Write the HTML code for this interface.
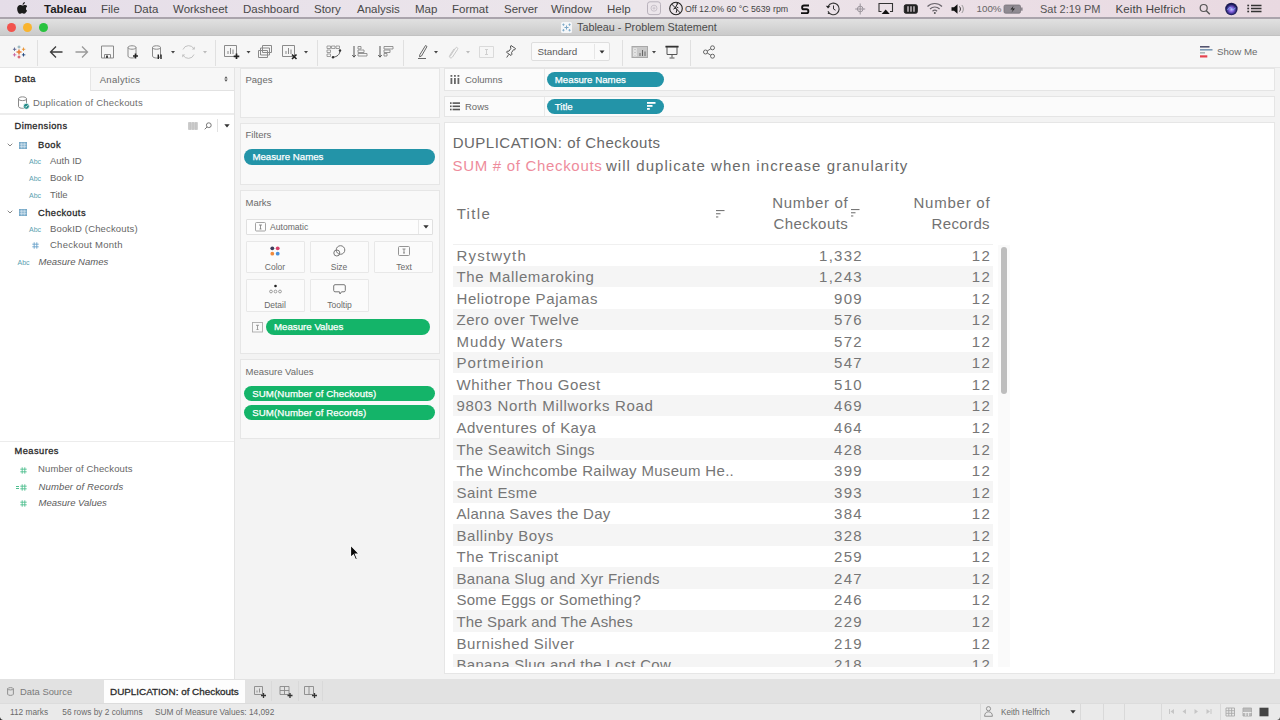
<!DOCTYPE html>
<html><head><meta charset="utf-8"><title>Tableau - Problem Statement</title>
<style>
*{box-sizing:border-box;margin:0;padding:0}
html,body{width:1280px;height:720px;overflow:hidden;background:#e2e2e2;font-family:"Liberation Sans",sans-serif;color:#333}
.a{position:absolute}
.t{position:absolute;white-space:nowrap;line-height:1}
.blue{background:#2394a8}
.green{background:#14b469}
</style></head><body>
<!-- shelves and cards -->
<div class="a" style="left:234.5px;top:68px;width:1045.50px;height:611.00px;background:#f3f3f3"></div>
<div class="a" style="left:240px;top:67.5px;width:199.70px;height:50.00px;background:#f9f9f9;border:1px solid #e6e6e6"></div>
<span class="t" style="left:245.50px;top:75px;font-size:9.5px;color:#6a6a6a;">Pages</span>
<div class="a" style="left:240px;top:122.5px;width:199.70px;height:62.00px;background:#f9f9f9;border:1px solid #e6e6e6"></div>
<span class="t" style="left:245.50px;top:130px;font-size:9.5px;color:#6a6a6a;">Filters</span>
<div class="a blue" style="left:244.00px;top:149.00px;width:190.70px;height:15.80px;border-radius:7.90px"></div><span class="t" style="left:252.40px;top:152px;font-size:9.7px;color:#fff;-webkit-text-stroke:.25px #fff;">Measure Names</span>
<div class="a" style="left:240px;top:190px;width:199.70px;height:163.50px;background:#f9f9f9;border:1px solid #e6e6e6"></div>
<span class="t" style="left:245.50px;top:198px;font-size:9.5px;color:#6a6a6a;">Marks</span>
<div class="a" style="left:245.5px;top:219px;width:187.00px;height:15.50px;background:#fdfdfd;border:1px solid #e0e0e0;border-radius:1px"></div>
<div class="a" style="left:418px;top:220px;width:1.00px;height:13.50px;background:#e8e8e8"></div>
<svg class="a" style="left:423px;top:225px" width="6" height="4" viewBox="0 0 6 4"><path d="M.3.300h5.400L3 3.600z" fill="#333"/></svg>
<svg class="a" style="left:254.500px;top:222px" width="11" height="10" viewBox="0 0 11 10" fill="none" stroke="#999" stroke-width=".9"><rect x=".5" y=".5" width="10" height="8.500" rx="1"/><path d="M4 3h3M5.500 3v4M4.500 7h2" stroke="#777" stroke-width=".8"/></svg>
<span class="t" style="left:270.00px;top:223px;font-size:8.6px;color:#6a6a6a;">Automatic</span>
<div class="a" style="left:245.5px;top:240.5px;width:59.20px;height:32.20px;background:#fbfbfb;border:1px solid #e8e8e8;border-radius:1px"></div>
<div class="a" style="left:309.5px;top:240.5px;width:59.50px;height:32.20px;background:#fbfbfb;border:1px solid #e8e8e8;border-radius:1px"></div>
<div class="a" style="left:374.4px;top:240.5px;width:58.60px;height:32.20px;background:#fbfbfb;border:1px solid #e8e8e8;border-radius:1px"></div>
<div class="a" style="left:245.5px;top:279px;width:59.20px;height:32.50px;background:#fbfbfb;border:1px solid #e8e8e8;border-radius:1px"></div>
<div class="a" style="left:309.5px;top:279px;width:59.50px;height:32.50px;background:#fbfbfb;border:1px solid #e8e8e8;border-radius:1px"></div>
<span class="t" style="left:225.00px;width:100px;text-align:center;top:263px;font-size:8.5px;color:#6a6a6a;">Color</span>
<span class="t" style="left:289.00px;width:100px;text-align:center;top:263px;font-size:8.5px;color:#6a6a6a;">Size</span>
<span class="t" style="left:354.00px;width:100px;text-align:center;top:263px;font-size:8.5px;color:#6a6a6a;">Text</span>
<span class="t" style="left:225.00px;width:100px;text-align:center;top:301px;font-size:8.5px;color:#6a6a6a;">Detail</span>
<span class="t" style="left:289.50px;width:100px;text-align:center;top:301px;font-size:8.5px;color:#6a6a6a;">Tooltip</span>
<svg class="a" style="left:270px;top:246px" width="10" height="10" viewBox="0 0 10 10"><circle cx="2.300" cy="2.300" r="1.900" fill="#3c3c5a"/><circle cx="7.700" cy="2.300" r="1.900" fill="#d8426a"/><circle cx="2.300" cy="7.700" r="1.900" fill="#f08a3c"/><circle cx="7.700" cy="7.700" r="1.900" fill="#4a90d9"/></svg>
<svg class="a" style="left:333px;top:245px" width="13" height="12" viewBox="0 0 13 12" fill="none" stroke="#777" stroke-width="1"><circle cx="7.500" cy="5" r="4.300"/><circle cx="3.800" cy="8" r="3"/></svg>
<svg class="a" style="left:398px;top:246px" width="12" height="10" viewBox="0 0 12 10" fill="none" stroke="#888" stroke-width=".9"><rect x=".5" y=".5" width="11" height="9" rx="1"/><path d="M4.500 3h3M6 3v4M5 7h2" stroke="#777" stroke-width=".8"/></svg>
<svg class="a" style="left:268.500px;top:284px" width="13" height="10" viewBox="0 0 13 10" fill="none" stroke="#888" stroke-width=".8"><circle cx="6.500" cy="2" r="1.300" fill="#222" stroke="none"/><circle cx="2" cy="7.500" r="1.400"/><circle cx="6.500" cy="7.500" r="1.400"/><circle cx="11" cy="7.500" r="1.400"/></svg>
<svg class="a" style="left:333px;top:283.500px" width="13" height="12" viewBox="0 0 13 12" fill="none" stroke="#777" stroke-width="1"><path d="M2 .7h9c.8 0 1.300.5 1.300 1.300v4.500c0 .8-.5 1.300-1.300 1.300H8.500L7 10 6.500 7.800H2C1.200 7.800.7 7.300.7 6.500V2C.7 1.200 1.200.7 2 .7z"/></svg>
<svg class="a" style="left:251.500px;top:322px" width="11" height="11" viewBox="0 0 11 11" fill="none" stroke="#aaa" stroke-width=".9"><rect x=".5" y=".5" width="10" height="9.500"/><path d="M4 3.300h3M5.500 3.300v4M4.500 7.500h2" stroke="#888" stroke-width=".8"/></svg>
<div class="a green" style="left:265.80px;top:319.30px;width:164.40px;height:16.00px;border-radius:8.00px"></div><span class="t" style="left:274.00px;top:322px;font-size:9.7px;color:#fff;-webkit-text-stroke:.25px #fff;">Measure Values</span>
<div class="a" style="left:240px;top:359.3px;width:199.70px;height:80.00px;background:#f9f9f9;border:1px solid #e6e6e6"></div>
<span class="t" style="left:245.50px;top:367px;font-size:9.5px;color:#6a6a6a;">Measure Values</span>
<div class="a green" style="left:244.00px;top:385.80px;width:191.00px;height:15.40px;border-radius:7.70px"></div><span class="t" style="left:252.20px;top:389px;font-size:9.7px;color:#fff;-webkit-text-stroke:.25px #fff;letter-spacing:.1px">SUM(Number of Checkouts)</span>
<div class="a green" style="left:244.00px;top:404.60px;width:191.00px;height:15.10px;border-radius:7.55px"></div><span class="t" style="left:252.20px;top:408px;font-size:9.7px;color:#fff;-webkit-text-stroke:.25px #fff;letter-spacing:.1px">SUM(Number of Records)</span>
<div class="a" style="left:443.7px;top:67.5px;width:831.80px;height:23.00px;background:#fbfbfb;border:1px solid #e5e5e5"></div><div class="a" style="left:544px;top:68.5px;width:1.00px;height:21.00px;background:#e8e8e8"></div>
<div class="a" style="left:443.7px;top:95.5px;width:831.80px;height:21.50px;background:#fbfbfb;border:1px solid #e5e5e5"></div><div class="a" style="left:544px;top:96.5px;width:1.00px;height:19.50px;background:#e8e8e8"></div>
<svg class="a" style="left:449.500px;top:74.500px" width="10" height="9" viewBox="0 0 10 9" fill="#666"><rect x=".5" y="0" width="1.800" height="1.800"/><rect x=".5" y="3" width="1.800" height="6"/><rect x="4" y="0" width="1.800" height="1.800"/><rect x="4" y="3" width="1.800" height="6"/><rect x="7.500" y="0" width="1.800" height="1.800"/><rect x="7.500" y="3" width="1.800" height="6"/></svg>
<span class="t" style="left:465.00px;top:75px;font-size:9.5px;color:#6a6a6a;">Columns</span>
<svg class="a" style="left:449.500px;top:101.500px" width="10" height="9" viewBox="0 0 10 9" fill="#555"><rect x="0" y=".3" width="1.600" height="1.600"/><rect x="2.600" y=".3" width="7.400" height="1.600"/><rect x="0" y="3.500" width="1.600" height="1.600"/><rect x="2.600" y="3.500" width="7.400" height="1.600"/><rect x="0" y="6.700" width="1.600" height="1.600"/><rect x="2.600" y="6.700" width="7.400" height="1.600"/></svg>
<span class="t" style="left:465.00px;top:102px;font-size:9.5px;color:#6a6a6a;">Rows</span>
<div class="a blue" style="left:546.70px;top:71.50px;width:117.80px;height:15.30px;border-radius:7.65px"></div><span class="t" style="left:554.80px;top:75px;font-size:9.7px;color:#fff;-webkit-text-stroke:.25px #fff;">Measure Names</span>
<div class="a blue" style="left:546.70px;top:98.60px;width:117.80px;height:15.20px;border-radius:7.60px"></div><span class="t" style="left:554.80px;top:102px;font-size:9.7px;color:#fff;-webkit-text-stroke:.25px #fff;">Title</span>
<svg class="a" style="left:646.800px;top:102px" width="9" height="8" viewBox="0 0 9 8" fill="#fff"><rect x="0" y="0" width="8.500" height="1.800"/><rect x="0" y="3" width="5.500" height="1.800"/><rect x="0" y="6" width="2.800" height="1.800"/></svg>
<!-- data pane -->
<div class="a" style="left:0px;top:68px;width:234.00px;height:611.00px;background:#fff"></div>
<div class="a" style="left:233.5px;top:68px;width:1.00px;height:611.00px;background:#e4e4e4"></div>
<div class="a" style="left:89.5px;top:68px;width:144.50px;height:22.70px;background:#f7f7f7;border-left:1px solid #e6e6e6;border-bottom:1px solid #e2e2e2"></div>
<span class="t" style="left:14.50px;top:75px;font-size:9.3px;color:#262626;-webkit-text-stroke:.3px #2a2a2a;letter-spacing:.45px">Data</span>
<span class="t" style="left:99.70px;top:75px;font-size:9.5px;color:#6a6a6a;letter-spacing:.3px">Analytics</span>
<svg class="a" style="left:224px;top:76px" width="4" height="6" viewBox="0 0 4 6"><path d="M.3 2.400L2 .3l1.700 2.100zM.3 3.600L2 5.700l1.700-2.100z" fill="#555"/></svg>
<svg class="a" style="left:17px;top:96px" width="13" height="14" viewBox="0 0 13 14" fill="none" stroke="#8a8a8a" stroke-width="1"><path d="M1.500 2.800c0-2.600 8-2.600 8 0v7.500c0 1.500-2.500 2-4 2s-4-.5-4-2zM1.500 2.800c0 2.400 8 2.400 8 0"/><circle cx="9.300" cy="10.300" r="3" fill="#1f8a86" stroke="#fff" stroke-width=".8"/><path d="M7.900 10.300l1 1 1.700-2" stroke="#fff" stroke-width=".8"/></svg>
<span class="t" style="left:33.00px;top:98px;font-size:9.5px;color:#6e6e6e;letter-spacing:.2px">Duplication of Checkouts</span>
<div class="a" style="left:0px;top:113.2px;width:233.50px;height:1.40px;background:#ececec"></div>
<span class="t" style="left:14.50px;top:122px;font-size:9.3px;color:#262626;-webkit-text-stroke:.3px #2a2a2a;letter-spacing:.45px">Dimensions</span>
<svg class="a" style="left:188px;top:122px" width="10" height="8" viewBox="0 0 10 8" fill="#c9c9c9" stroke="#b4b4b4" stroke-width=".5"><path d="M.5.500h2.500v7H.5zM3.700.500h2.500v7H3.700zM6.900.500h2.500v7H6.900z"/></svg>
<svg class="a" style="left:203.500px;top:122px" width="8" height="8" viewBox="0 0 8 8" fill="none" stroke="#777" stroke-width="1"><circle cx="4.800" cy="3.200" r="2.400"/><path d="M3 5L.7 7.300"/></svg>
<div class="a" style="left:217px;top:119px;width:1.00px;height:13.00px;background:#e2e2e2"></div>
<svg class="a" style="left:223.500px;top:123.800px" width="6" height="4" viewBox="0 0 6 4"><path d="M.3.300h5.400L3 3.600z" fill="#333"/></svg>
<svg class="a" style="left:6.5px;top:143px" width="6" height="4" viewBox="0 0 6 4" fill="none" stroke="#888" stroke-width="1"><path d="M.7.700L3 3l2.300-2.300"/></svg>
<svg class="a" style="left:19px;top:141.5px" width="8" height="7" viewBox="0 0 8 7"><rect x="0" y="0" width="8" height="7" fill="#8db7d2"/><path d="M0 2.200h8M0 4.600h8M2.700 0v7M5.300 0v7" stroke="#dbe9f2" stroke-width=".6"/><rect x=".3" y=".3" width="7.400" height="6.400" fill="none" stroke="#6fa3c4" stroke-width=".6"/></svg>
<span class="t" style="left:38.00px;top:141px;font-size:9.3px;color:#262626;-webkit-text-stroke:.3px #2a2a2a;letter-spacing:.45px">Book</span>
<span class="t" style="left:29.00px;top:158px;font-size:7px;color:#5b9fb1;">Abc</span>
<span class="t" style="left:50.00px;top:156px;font-size:9.5px;color:#666;">Auth ID</span>
<span class="t" style="left:29.00px;top:175px;font-size:7px;color:#5b9fb1;">Abc</span>
<span class="t" style="left:50.00px;top:173px;font-size:9.5px;color:#666;">Book ID</span>
<span class="t" style="left:29.00px;top:192px;font-size:7px;color:#5b9fb1;">Abc</span>
<span class="t" style="left:50.00px;top:190px;font-size:9.5px;color:#666;">Title</span>
<svg class="a" style="left:6.5px;top:210px" width="6" height="4" viewBox="0 0 6 4" fill="none" stroke="#888" stroke-width="1"><path d="M.7.700L3 3l2.300-2.300"/></svg>
<svg class="a" style="left:19px;top:208.5px" width="8" height="7" viewBox="0 0 8 7"><rect x="0" y="0" width="8" height="7" fill="#8db7d2"/><path d="M0 2.200h8M0 4.600h8M2.700 0v7M5.300 0v7" stroke="#dbe9f2" stroke-width=".6"/><rect x=".3" y=".3" width="7.400" height="6.400" fill="none" stroke="#6fa3c4" stroke-width=".6"/></svg>
<span class="t" style="left:38.00px;top:209px;font-size:9.3px;color:#262626;-webkit-text-stroke:.3px #2a2a2a;letter-spacing:.45px">Checkouts</span>
<span class="t" style="left:29.00px;top:226px;font-size:7px;color:#5b9fb1;">Abc</span>
<span class="t" style="left:50.00px;top:224px;font-size:9.5px;color:#666;letter-spacing:.15px">BookID (Checkouts)</span>
<svg class="a" style="left:31.5px;top:242.0px" width="7" height="7" viewBox="0 0 7 7" fill="none" stroke="#6aa3c9" stroke-width=".9"><path d="M2.200 .3v6.400M4.800 .3v6.400M.3 2.200h6.400M.3 4.800h6.400"/></svg>
<span class="t" style="left:50.00px;top:240px;font-size:9.5px;color:#666;letter-spacing:.25px">Checkout Month</span>
<span class="t" style="left:17.50px;top:259px;font-size:7px;color:#5b9fb1;">Abc</span>
<span class="t" style="left:38.50px;top:257px;font-size:9.5px;color:#5a5a5a;font-style:italic">Measure Names</span>
<div class="a" style="left:0px;top:440.5px;width:233.50px;height:1.50px;background:#ececec"></div>
<span class="t" style="left:14.50px;top:447px;font-size:9.3px;color:#262626;-webkit-text-stroke:.3px #2a2a2a;letter-spacing:.45px">Measures</span>
<svg class="a" style="left:19.5px;top:466.5px" width="7" height="7" viewBox="0 0 7 7" fill="none" stroke="#4fbf8f" stroke-width=".9"><path d="M2.200 .3v6.400M4.800 .3v6.400M.3 2.200h6.400M.3 4.800h6.400"/></svg>
<span class="t" style="left:38.00px;top:464px;font-size:9.5px;color:#666;letter-spacing:.15px">Number of Checkouts</span>
<svg class="a" style="left:19.5px;top:483.5px" width="7" height="7" viewBox="0 0 7 7" fill="none" stroke="#4fbf8f" stroke-width=".9"><path d="M2.200 .3v6.400M4.800 .3v6.400M.3 2.200h6.400M.3 4.800h6.400"/></svg>
<div class="a" style="left:16px;top:485.5px;width:3.00px;height:1.00px;background:#4fbf8f"></div>
<div class="a" style="left:16px;top:487.5px;width:3.00px;height:1.00px;background:#4fbf8f"></div>
<span class="t" style="left:38.50px;top:482px;font-size:9.5px;color:#5a5a5a;font-style:italic;letter-spacing:.15px">Number of Records</span>
<svg class="a" style="left:19.5px;top:500.0px" width="7" height="7" viewBox="0 0 7 7" fill="none" stroke="#4fbf8f" stroke-width=".9"><path d="M2.200 .3v6.400M4.800 .3v6.400M.3 2.200h6.400M.3 4.800h6.400"/></svg>
<span class="t" style="left:38.50px;top:498px;font-size:9.5px;color:#5a5a5a;font-style:italic">Measure Values</span>
<!-- viz -->
<div class="a" style="left:443.7px;top:122px;width:831.80px;height:551.50px;background:#fff;border:1px solid #e6e6e6"></div>
<span class="t" style="left:452.70px;top:135px;font-size:15px;color:#686868;letter-spacing:0.491px">DUPLICATION: of Checkouts</span>
<span class="t" style="left:452.50px;top:158px;font-size:15px;color:#ee8c9c;letter-spacing:0.690px">SUM # of Checkouts</span>
<span class="t" style="left:605.95px;top:158px;font-size:15px;color:#6a6a6a;letter-spacing:1.059px">will duplicate when increase granularity</span>
<span class="t" style="left:456.70px;top:206px;font-size:15px;color:#727272;letter-spacing:1.330px">Title</span>
<span class="t" style="left:772.20px;top:195px;font-size:15px;color:#727272;letter-spacing:0.696px">Number of</span>
<span class="t" style="left:773.45px;top:216px;font-size:15px;color:#727272;letter-spacing:0.434px">Checkouts</span>
<span class="t" style="left:913.50px;top:195px;font-size:15px;color:#727272;letter-spacing:0.759px">Number of</span>
<span class="t" style="left:931.50px;top:216px;font-size:15px;color:#727272;letter-spacing:0.373px">Records</span>
<svg class="a" style="left:715.5px;top:209.5px" width="9" height="8" viewBox="0 0 9 8" fill="#777"><rect x="0" y="0" width="8.500" height="1.100"/><rect x="0" y="3.200" width="4.500" height="1.100"/><rect x="0" y="6.400" width="2.300" height="1.100"/></svg>
<svg class="a" style="left:850.5px;top:209.3px" width="9" height="8" viewBox="0 0 9 8" fill="#777"><rect x="0" y="0" width="8.500" height="1.100"/><rect x="0" y="3.200" width="4.500" height="1.100"/><rect x="0" y="6.400" width="2.300" height="1.100"/></svg>
<div class="a" style="left:452.5px;top:243.9px;width:540.00px;height:1.00px;background:#f0f0f0"></div>
<div class="a" style="left:997.5px;top:245px;width:12.50px;height:421.80px;background:#fafafa"></div>
<div class="a" style="left:444px;top:245px;width:570px;height:422px;overflow:hidden">
<span class="t" style="left:12.50px;top:3px;font-size:15px;color:#767676;letter-spacing:1.208px">Rystwyth</span>
<span class="t" style="left:318.90px;width:100px;text-align:right;top:3px;font-size:15px;color:#767676;letter-spacing:1.25px">1,332</span>
<span class="t" style="left:447.05px;width:100px;text-align:right;top:3px;font-size:15px;color:#767676;letter-spacing:1.25px">12</span>
<div class="a" style="left:8.5px;top:20.60px;width:540px;height:21.500px;background:#f5f5f5"></div>
<span class="t" style="left:12.50px;top:24px;font-size:15px;color:#767676;letter-spacing:0.609px">The Mallemaroking</span>
<span class="t" style="left:318.90px;width:100px;text-align:right;top:24px;font-size:15px;color:#767676;letter-spacing:1.25px">1,243</span>
<span class="t" style="left:447.05px;width:100px;text-align:right;top:24px;font-size:15px;color:#767676;letter-spacing:1.25px">12</span>
<span class="t" style="left:12.50px;top:46px;font-size:15px;color:#767676;letter-spacing:0.597px">Heliotrope Pajamas</span>
<span class="t" style="left:318.90px;width:100px;text-align:right;top:46px;font-size:15px;color:#767676;letter-spacing:1.25px">909</span>
<span class="t" style="left:447.05px;width:100px;text-align:right;top:46px;font-size:15px;color:#767676;letter-spacing:1.25px">12</span>
<div class="a" style="left:8.5px;top:63.71px;width:540px;height:21.500px;background:#f5f5f5"></div>
<span class="t" style="left:12.50px;top:67px;font-size:15px;color:#767676;letter-spacing:0.501px">Zero over Twelve</span>
<span class="t" style="left:318.90px;width:100px;text-align:right;top:67px;font-size:15px;color:#767676;letter-spacing:1.25px">576</span>
<span class="t" style="left:447.05px;width:100px;text-align:right;top:67px;font-size:15px;color:#767676;letter-spacing:1.25px">12</span>
<span class="t" style="left:12.50px;top:89px;font-size:15px;color:#767676;letter-spacing:0.901px">Muddy Waters</span>
<span class="t" style="left:318.90px;width:100px;text-align:right;top:89px;font-size:15px;color:#767676;letter-spacing:1.25px">572</span>
<span class="t" style="left:447.05px;width:100px;text-align:right;top:89px;font-size:15px;color:#767676;letter-spacing:1.25px">12</span>
<div class="a" style="left:8.5px;top:106.82px;width:540px;height:21.500px;background:#f5f5f5"></div>
<span class="t" style="left:12.50px;top:110px;font-size:15px;color:#767676;letter-spacing:1.010px">Portmeirion</span>
<span class="t" style="left:318.90px;width:100px;text-align:right;top:110px;font-size:15px;color:#767676;letter-spacing:1.25px">547</span>
<span class="t" style="left:447.05px;width:100px;text-align:right;top:110px;font-size:15px;color:#767676;letter-spacing:1.25px">12</span>
<span class="t" style="left:12.50px;top:132px;font-size:15px;color:#767676;letter-spacing:0.565px">Whither Thou Goest</span>
<span class="t" style="left:318.90px;width:100px;text-align:right;top:132px;font-size:15px;color:#767676;letter-spacing:1.25px">510</span>
<span class="t" style="left:447.05px;width:100px;text-align:right;top:132px;font-size:15px;color:#767676;letter-spacing:1.25px">12</span>
<div class="a" style="left:8.5px;top:149.93px;width:540px;height:21.500px;background:#f5f5f5"></div>
<span class="t" style="left:12.50px;top:153px;font-size:15px;color:#767676;letter-spacing:0.676px">9803 North Millworks Road</span>
<span class="t" style="left:318.90px;width:100px;text-align:right;top:153px;font-size:15px;color:#767676;letter-spacing:1.25px">469</span>
<span class="t" style="left:447.05px;width:100px;text-align:right;top:153px;font-size:15px;color:#767676;letter-spacing:1.25px">12</span>
<span class="t" style="left:12.50px;top:175px;font-size:15px;color:#767676;letter-spacing:0.493px">Adventures of Kaya</span>
<span class="t" style="left:318.90px;width:100px;text-align:right;top:175px;font-size:15px;color:#767676;letter-spacing:1.25px">464</span>
<span class="t" style="left:447.05px;width:100px;text-align:right;top:175px;font-size:15px;color:#767676;letter-spacing:1.25px">12</span>
<div class="a" style="left:8.5px;top:193.04px;width:540px;height:21.500px;background:#f5f5f5"></div>
<span class="t" style="left:12.50px;top:197px;font-size:15px;color:#767676;letter-spacing:0.322px">The Seawitch Sings</span>
<span class="t" style="left:318.90px;width:100px;text-align:right;top:197px;font-size:15px;color:#767676;letter-spacing:1.25px">428</span>
<span class="t" style="left:447.05px;width:100px;text-align:right;top:197px;font-size:15px;color:#767676;letter-spacing:1.25px">12</span>
<span class="t" style="left:12.50px;top:218px;font-size:15px;color:#767676;letter-spacing:0.319px">The Winchcombe Railway Museum He..</span>
<span class="t" style="left:318.90px;width:100px;text-align:right;top:218px;font-size:15px;color:#767676;letter-spacing:1.25px">399</span>
<span class="t" style="left:447.05px;width:100px;text-align:right;top:218px;font-size:15px;color:#767676;letter-spacing:1.25px">12</span>
<div class="a" style="left:8.5px;top:236.15px;width:540px;height:21.500px;background:#f5f5f5"></div>
<span class="t" style="left:12.50px;top:240px;font-size:15px;color:#767676;letter-spacing:0.427px">Saint Esme</span>
<span class="t" style="left:318.90px;width:100px;text-align:right;top:240px;font-size:15px;color:#767676;letter-spacing:1.25px">393</span>
<span class="t" style="left:447.05px;width:100px;text-align:right;top:240px;font-size:15px;color:#767676;letter-spacing:1.25px">12</span>
<span class="t" style="left:12.50px;top:261px;font-size:15px;color:#767676;letter-spacing:0.282px">Alanna Saves the Day</span>
<span class="t" style="left:318.90px;width:100px;text-align:right;top:261px;font-size:15px;color:#767676;letter-spacing:1.25px">384</span>
<span class="t" style="left:447.05px;width:100px;text-align:right;top:261px;font-size:15px;color:#767676;letter-spacing:1.25px">12</span>
<div class="a" style="left:8.5px;top:279.26px;width:540px;height:21.500px;background:#f5f5f5"></div>
<span class="t" style="left:12.50px;top:283px;font-size:15px;color:#767676;letter-spacing:0.563px">Ballinby Boys</span>
<span class="t" style="left:318.90px;width:100px;text-align:right;top:283px;font-size:15px;color:#767676;letter-spacing:1.25px">328</span>
<span class="t" style="left:447.05px;width:100px;text-align:right;top:283px;font-size:15px;color:#767676;letter-spacing:1.25px">12</span>
<span class="t" style="left:12.50px;top:304px;font-size:15px;color:#767676;letter-spacing:0.583px">The Triscanipt</span>
<span class="t" style="left:318.90px;width:100px;text-align:right;top:304px;font-size:15px;color:#767676;letter-spacing:1.25px">259</span>
<span class="t" style="left:447.05px;width:100px;text-align:right;top:304px;font-size:15px;color:#767676;letter-spacing:1.25px">12</span>
<div class="a" style="left:8.5px;top:322.37px;width:540px;height:21.500px;background:#f5f5f5"></div>
<span class="t" style="left:12.50px;top:326px;font-size:15px;color:#767676;letter-spacing:0.273px">Banana Slug and Xyr Friends</span>
<span class="t" style="left:318.90px;width:100px;text-align:right;top:326px;font-size:15px;color:#767676;letter-spacing:1.25px">247</span>
<span class="t" style="left:447.05px;width:100px;text-align:right;top:326px;font-size:15px;color:#767676;letter-spacing:1.25px">12</span>
<span class="t" style="left:12.50px;top:347px;font-size:15px;color:#767676;letter-spacing:0.228px">Some Eggs or Something?</span>
<span class="t" style="left:318.90px;width:100px;text-align:right;top:347px;font-size:15px;color:#767676;letter-spacing:1.25px">246</span>
<span class="t" style="left:447.05px;width:100px;text-align:right;top:347px;font-size:15px;color:#767676;letter-spacing:1.25px">12</span>
<div class="a" style="left:8.5px;top:365.48px;width:540px;height:21.500px;background:#f5f5f5"></div>
<span class="t" style="left:12.50px;top:369px;font-size:15px;color:#767676;letter-spacing:0.142px">The Spark and The Ashes</span>
<span class="t" style="left:318.90px;width:100px;text-align:right;top:369px;font-size:15px;color:#767676;letter-spacing:1.25px">229</span>
<span class="t" style="left:447.05px;width:100px;text-align:right;top:369px;font-size:15px;color:#767676;letter-spacing:1.25px">12</span>
<span class="t" style="left:12.50px;top:391px;font-size:15px;color:#767676;letter-spacing:0.555px">Burnished Silver</span>
<span class="t" style="left:318.90px;width:100px;text-align:right;top:391px;font-size:15px;color:#767676;letter-spacing:1.25px">219</span>
<span class="t" style="left:447.05px;width:100px;text-align:right;top:391px;font-size:15px;color:#767676;letter-spacing:1.25px">12</span>
<div class="a" style="left:8.5px;top:408.59px;width:540px;height:21.500px;background:#f5f5f5"></div>
<span class="t" style="left:12.50px;top:412px;font-size:15px;color:#767676;letter-spacing:0.277px">Banana Slug and the Lost Cow</span>
<span class="t" style="left:318.90px;width:100px;text-align:right;top:412px;font-size:15px;color:#767676;letter-spacing:1.25px">218</span>
<span class="t" style="left:447.05px;width:100px;text-align:right;top:412px;font-size:15px;color:#767676;letter-spacing:1.25px">12</span>
</div>
<div class="a" style="left:1001.3px;top:246.5px;width:5.70px;height:147.00px;border-radius:3px;background:#bdbdbd"></div>
<!-- menubar titlebar toolbar -->
<div class="a" style="left:0px;top:0px;width:1280.00px;height:17.00px;background:linear-gradient(90deg,#e5dde8 0%,#e9e2ea 25%,#ece6eb 50%,#ebdfe6 75%,#e9d9e1 100%)"></div>
<div class="a" style="left:0px;top:17px;width:1280.00px;height:1.50px;background:#aaa4ac"></div>
<svg class="a" style="left:16.800px;top:1.800px" width="10.600" height="12" viewBox="-.6 0 12 13.400"><path d="M8.300 0c.1.800-.2 1.500-.7 2.100-.5.600-1.200 1-1.900.9-.1-.8.300-1.500.7-2C6.900.400 7.700 0 8.300 0zM10.800 9.500c-.3.800-.5 1.100-.9 1.800-.6.900-1.400 2-2.400 2-.9 0-1.100-.6-2.300-.6s-1.500.6-2.400.6c-1 0-1.700-1-2.300-1.900C-.6 9.100-.8 6.300.300 4.900c.7-1 1.800-1.600 2.900-1.600 1.100 0 1.800.600 2.700.600.900 0 1.400-.6 2.700-.6.900 0 1.900.500 2.600 1.400-2.300 1.300-1.900 4.500-.4 4.800z" fill="#1b1b1b"/></svg>
<span class="t" style="left:44.00px;top:4px;font-size:11.5px;color:#1d1d1d;font-weight:bold">Tableau</span>
<span class="t" style="left:101.00px;top:4px;font-size:11.5px;color:#484848;">File</span>
<span class="t" style="left:134.00px;top:4px;font-size:11.5px;color:#484848;">Data</span>
<span class="t" style="left:173.00px;top:4px;font-size:11.5px;color:#484848;">Worksheet</span>
<span class="t" style="left:243.00px;top:4px;font-size:11.5px;color:#484848;">Dashboard</span>
<span class="t" style="left:314.00px;top:4px;font-size:11.5px;color:#484848;">Story</span>
<span class="t" style="left:357.00px;top:4px;font-size:11.5px;color:#484848;">Analysis</span>
<span class="t" style="left:415.00px;top:4px;font-size:11.5px;color:#484848;">Map</span>
<span class="t" style="left:452.00px;top:4px;font-size:11.5px;color:#484848;">Format</span>
<span class="t" style="left:504.00px;top:4px;font-size:11.5px;color:#484848;">Server</span>
<span class="t" style="left:551.00px;top:4px;font-size:11.5px;color:#484848;">Window</span>
<span class="t" style="left:607.00px;top:4px;font-size:11.5px;color:#484848;">Help</span>
<svg class="a" style="left:640px;top:0" width="640" height="18" viewBox="640 0 640 18" fill="none" stroke="#222" stroke-width="1.200">
<rect x="647.500" y="1.800" width="13" height="12.800" rx="2.500" stroke="#b9b2bc" stroke-width="1"/><circle cx="654" cy="8.200" r="3" stroke="#c4bdc6" stroke-width=".9"/><path d="M652.500 8.200h3M654 6.700v3" stroke="#c4bdc6" stroke-width=".8"/>
<circle cx="676" cy="8.500" r="6.300" stroke="#222" stroke-width="1.100"/><path d="M671.600 4l8.800 9" stroke="#222" stroke-width="1"/><path d="M677 4.500l-1.800 3.500 1.800 1.500-.8 3.200M675.200 8l-1.800 1.200M676.500 7l1.800.8" stroke="#222" stroke-width="1"/><circle cx="677.300" cy="3.800" r=".9" fill="#222" stroke="none"/>
<path d="M809 5.500h-5c-2.500 0-2.500 3.800 0 3.800h2.500c2.500 0 2.500 3.800 0 3.800H801" stroke="#111" stroke-width="1.900"/>
<path d="M828.200 6.200a5.800 5.800 0 1 1-.2 5" stroke="#333" stroke-width="1.100"/><path d="M825.800 5.800l2.200 2.800 2.300-2.400z" fill="#222" stroke="none"/><path d="M833.500 5.500v3.500l2 1.200" stroke="#333" stroke-width="1"/><circle cx="828.500" cy="13.200" r=".8" fill="#222" stroke="none"/>
<g stroke="#9a949c" stroke-width="1"><circle cx="860.200" cy="9" r="2.800"/><path d="M860.200 3.500v11M855.200 9h10"/></g>
<path d="M881.500 11.500h-2.500v-8h13.500v8h-2.500" stroke="#333" stroke-width="1.100"/><path d="M885.700 9.500l4 4.500h-8z" fill="#111" stroke="none"/>
<rect x="904.300" y="4.800" width="13" height="8.400" rx="1.500" fill="#222" stroke="#222" stroke-width="1"/><path d="M908 6.200v5.600M911 6.200v5.600M914 6.200v5.600" stroke="#ebe0e7" stroke-width="1.200"/>
<g stroke="#6a656c" stroke-width="1.200"><path d="M927.500 6.500c4-4 10.500-4 14.500 0M930 9c2.800-2.700 6.800-2.700 9.600 0M932.500 11.300c1.400-1.300 3.200-1.300 4.600 0"/></g><circle cx="934.800" cy="13" r="1" fill="#555" stroke="none"/>
<path d="M951.500 7.300h2.500l3.500-3v9.400l-3.500-3h-2.500z" fill="#111" stroke="none"/><path d="M959.500 6.500c1.200 1.500 1.200 3.500 0 5" stroke="#333" stroke-width="1"/><path d="M961.800 5c2 2.300 2 5.700 0 8" stroke="#999" stroke-width="1"/>
<rect x="1004" y="5" width="16.500" height="8.200" rx="1.500" fill="#8f8a92" stroke="#77727a" stroke-width=".8"/><rect x="1021.200" y="7.500" width="1.300" height="3.200" fill="#77727a" stroke="none"/><path d="M1013.500 5.800l-3 3.600h2.500l-1.500 3.200 3.500-4h-2.500z" fill="#222" stroke="none"/>
<circle cx="1203.700" cy="8" r="3.500" stroke="#555" stroke-width="1.200"/><path d="M1206.300 10.700l3.500 3.500" stroke="#555" stroke-width="1.400"/>
<defs><radialGradient id="siri" cx=".5" cy=".55" r=".6"><stop offset="0" stop-color="#c9b6ff"/><stop offset=".35" stop-color="#7a5ad6"/><stop offset=".7" stop-color="#1c1d5e"/><stop offset="1" stop-color="#101038"/></radialGradient></defs>
<circle cx="1231.400" cy="9" r="6.200" fill="url(#siri)" stroke="none"/><path d="M1227.500 10c1.500-2.500 3-3.500 4-1.500s2.500 1.500 3.800-.8" stroke="#7fd4ff" stroke-width=".9" opacity=".8"/>
<g stroke="#333" stroke-width="1.500"><path d="M1251 5.500h10.500M1251 8.500h10.500M1251 11.500h10.500"/></g><g fill="#333" stroke="none"><rect x="1247.300" y="4.700" width="1.800" height="1.600"/><rect x="1247.300" y="7.700" width="1.800" height="1.600"/><rect x="1247.300" y="10.700" width="1.800" height="1.600"/></g>
</svg>
<span class="t" style="left:685.00px;top:5px;font-size:8.8px;color:#444;">Off 12.0% 60 °C 5639 rpm</span>
<span class="t" style="left:976.50px;top:4px;font-size:9.8px;color:#666;">100%</span>
<span class="t" style="left:1040.00px;top:4px;font-size:11px;color:#555;">Sat 2:19 PM</span>
<span class="t" style="left:1115.50px;top:4px;font-size:11.5px;color:#444;letter-spacing:.12px">Keith Helfrich</span>
<div class="a" style="left:0px;top:18.5px;width:1280.00px;height:17.00px;background:linear-gradient(#e1e1e1,#c9c9c9)"></div>
<div class="a" style="left:0px;top:34.5px;width:1280.00px;height:1.00px;background:#c2c2c2"></div>
<div class="a" style="left:6.5px;top:22.500px;width:9.400px;height:9.400px;border-radius:5px;background:#f2544d"></div>
<div class="a" style="left:22.5px;top:22.500px;width:9.400px;height:9.400px;border-radius:5px;background:#f9b42e"></div>
<div class="a" style="left:38.5px;top:22.500px;width:9.400px;height:9.400px;border-radius:5px;background:#29c33f"></div>
<svg class="a" style="left:560.500px;top:21.500px" width="11" height="11" viewBox="0 0 11 11"><rect x="0" y="0" width="11" height="11" rx="1.500" fill="#f4f6f8"/><g fill="#7aa7c7"><rect x="5" y="3.500" width="1" height="4"/><rect x="3.500" y="5" width="4" height="1"/><rect x="2" y="1.500" width=".8" height="2.400"/><rect x="1.200" y="2.300" width="2.400" height=".8"/><rect x="8.200" y="1.500" width=".8" height="2.400"/><rect x="7.400" y="2.300" width="2.400" height=".8"/><rect x="2" y="7" width=".8" height="2.400"/><rect x="1.200" y="7.800" width="2.400" height=".8"/><rect x="8.200" y="7" width=".8" height="2.400"/><rect x="7.400" y="7.800" width="2.400" height=".8"/></g></svg>
<span class="t" style="left:577.00px;top:22px;font-size:10.8px;color:#4a4a4a;">Tableau - Problem Statement</span>
<div class="a" style="left:0px;top:35.5px;width:1280.00px;height:31.00px;background:#f6f6f6"></div>
<div class="a" style="left:0px;top:66.5px;width:1280.00px;height:1.50px;background:#e6e6e6"></div>
<svg class="a" style="left:0;top:36px" width="1280" height="32" viewBox="0 36 1280 32" fill="none" stroke="#666" stroke-width="1">
<g stroke="none">
<rect x="18.300" y="49.500" width="1.400" height="5" fill="#e8762c"/><rect x="16.500" y="51.300" width="5" height="1.400" fill="#e8762c"/>
<rect x="18.600" y="45.500" width=".8" height="3" fill="#7099a6"/><rect x="17.500" y="46.600" width="3" height=".8" fill="#7099a6"/>
<rect x="18.600" y="55.500" width=".8" height="3" fill="#c72035"/><rect x="17.500" y="56.600" width="3" height=".8" fill="#c72035"/>
<rect x="14.100" y="47.500" width=".9" height="3.400" fill="#5b6591"/><rect x="12.900" y="48.800" width="3.400" height=".9" fill="#5b6591"/>
<rect x="23.100" y="47.500" width=".9" height="3.400" fill="#eb912c"/><rect x="21.900" y="48.800" width="3.400" height=".9" fill="#eb912c"/>
<rect x="14.100" y="53.100" width=".9" height="3.400" fill="#c9619f"/><rect x="12.900" y="54.400" width="3.400" height=".9" fill="#c9619f"/>
<rect x="23.100" y="53.100" width=".9" height="3.400" fill="#1f447e"/><rect x="21.900" y="54.400" width="3.400" height=".9" fill="#1f447e"/>
</g>
<g stroke="#e0e0e0"><path d="M37.500 40v26M215.500 40v26M317.500 40v26M403.500 40v26M622.500 40v26M690.500 40v26"/></g>
<path d="M62.500 52H50.500M56 46.500L50.500 52l5.500 5.500" stroke="#3c3c3c" stroke-width="1.300"/>
<path d="M75.500 52H87.500M82 46.500L87.500 52l-5.500 5.500" stroke="#9a9a9a" stroke-width="1.300"/>
<path d="M101.500 46h12v12h-12zM104.500 58v-3.500h6V58" stroke="#8a8a8a"/><rect x="106" y="55.500" width="2" height="2.500" fill="#444" stroke="none"/>
<path d="M128 47.500c0-2.300 8-2.300 8 0v8.500c0 1.500-2.500 2-4 2s-4-.5-4-2zM128 47.500c0 2.300 8 2.300 8 0" stroke="#8a8a8a"/>
<path d="M135.500 53.500v5M133 56h5" stroke="#222" stroke-width="1.600"/>
<path d="M152.500 47.500c0-2.300 8-2.300 8 0v8.500c0 1.500-2.500 2-4 2s-4-.5-4-2zM152.500 47.500c0 2.300 8 2.300 8 0" stroke="#8a8a8a"/>
<path d="M158.300 54.500v4.500M161 54.500v4.500" stroke="#222" stroke-width="1.400"/>
<path d="M171 51h4l-2 2.500z" fill="#444" stroke="none"/>
<path d="M183 49.500a6 6 0 0 1 11-.5M194 54.500a6 6 0 0 1-11 .5" stroke="#c2c2c2"/><path d="M194.800 46.500v3h-3zM182.200 57.500v-3h3z" fill="#c2c2c2" stroke="none"/>
<path d="M203 51h4l-2 2.500z" fill="#bbb" stroke="none"/>
<path d="M224.500 45.500h12v11h-12z" stroke="#8a8a8a"/><path d="M228 54v-3M230.500 54v-6M233 54v-4.500" stroke="#8a8a8a"/>
<path d="M236.500 53.500v5.500M233.700 56.300h5.600" stroke="#222" stroke-width="1.700"/>
<path d="M246.5 51h4l-2 2.500z" fill="#444" stroke="none"/>
<path d="M262.500 45.500h9v7h-9zM260.500 48h9v7h-9zM258.500 50.500h9v7h-9z" stroke="#8a8a8a" fill="#f6f6f6"/>
<path d="M282.500 45.500h12v11h-12z" stroke="#8a8a8a"/><path d="M286 54v-3M288.500 54v-6M291 54v-4.500" stroke="#8a8a8a"/>
<path d="M292 54.500l4.500 4.500M296.500 54.500l-4.500 4.500" stroke="#222" stroke-width="1.600"/>
<path d="M304 51h4l-2 2.500z" fill="#444" stroke="none"/>
<path d="M327 46h3.500v2.500H327zM331.500 46h3.500v2.500h-3.500zM336 46h3.500v2.500H336zM327 50h3.500v2.500H327zM327 54h3.500v2.500H327z" stroke="#8a8a8a" stroke-width=".8"/>
<path d="M340 50.500c0 4-3 6.500-7 6.500" stroke="#555"/><circle cx="340" cy="50.500" r="1.200" fill="#333" stroke="none"/><circle cx="333" cy="57.300" r="1.200" fill="#333" stroke="none"/>
<path d="M354 46v11M352.300 55l1.700 2.200 1.700-2.200" stroke="#555"/>
<path d="M358 46.500h3v2.500h-3zM358 50h6v2.500h-6zM358 53.500h9v2.500h-9z" stroke="#8a8a8a" stroke-width=".9"/>
<path d="M380 46v11M378.300 55l1.700 2.200 1.700-2.200" stroke="#555"/>
<path d="M384 46.500h9v2.500h-9zM384 50h6v2.500h-6zM384 53.500h3v2.500h-3z" stroke="#8a8a8a" stroke-width=".9"/>
<path d="M425.500 45.500l1.500 1-5.500 9.500-2 .8.300-2zM418 58.500h8" stroke="#666"/>
<path d="M434 51h4l-2 2.500z" fill="#444" stroke="none"/>
<path d="M450 56.500l5.500-8.500c1-1.500 3 0 2 1.500l-5 7.500c-1.500 2-4 .3-2.800-1.500l4.300-6.500" stroke="#c8c8c8"/>
<path d="M466 51h4l-2 2.500z" fill="#bbb" stroke="none"/>
<path d="M479.500 46.500h14v11h-14z" stroke="#dadada"/><path d="M485 49.500h3M486.500 49.500v5M485 54.500h3" stroke="#d0d0d0"/>
<path d="M511 45.500l4.500 3-1 1.500-1-.3-2 3 .5 1.500-1 1.300-4.500-3.200 1-1.300 1.500.2 2-3-.7-1.200zM508.700 54.500l-2 3" stroke="#555"/>
<rect x="531.500" y="42.500" width="78" height="18" rx="1.500" fill="#fafafa" stroke="#dedede"/>
<path d="M594.500 44v15" stroke="#e6e6e6"/>
<path d="M599.500 50.500h5l-2.500 3z" fill="#333" stroke="none"/>
<rect x="632" y="46.500" width="15.500" height="11" fill="#c9c9c9" stroke="#a8a8a8"/>
<path d="M633.500 48.500h3v2h-3zM633.500 51.500h3v2h-3zM633.500 54.500h3v1.500h-3z" stroke="#eee" stroke-width=".7"/>
<path d="M640 56v-3M642.500 56v-6M645 56v-4.500" stroke="#666"/>
<path d="M652 51h4l-2 2.500z" fill="#444" stroke="none"/>
<path d="M665.500 47h13M667 47v7.500h10V47M672 54.500v3M669.500 58h5" stroke="#555"/><path d="M665.500 46.500h13" stroke="#333" stroke-width="1.500"/>
<g stroke="#666"><circle cx="705.500" cy="52" r="2"/><circle cx="712.500" cy="47.800" r="2"/><circle cx="712.500" cy="56.200" r="2"/><path d="M707.200 51l3.600-2.200M707.200 53l3.600 2.200"/></g>
<g stroke="none"><rect x="1200" y="46" width="9.500" height="1.600" fill="#54546f"/><rect x="1200" y="49" width="12.500" height="1.600" fill="#7d9ab5"/><rect x="1200" y="52.200" width="5" height="1.300" fill="#9aa"/><rect x="1200" y="55.300" width="7.300" height="2.200" fill="#e5424f"/></g>
</svg>
<span class="t" style="left:537.50px;top:47px;font-size:9.8px;color:#5a5a5a;">Standard</span>
<span class="t" style="left:1217.00px;top:47px;font-size:9.7px;color:#6a6a6a;">Show Me</span>
<!-- tabs status -->
<div class="a" style="left:0px;top:679.4px;width:1280.00px;height:23.60px;background:#e2e2e2"></div>
<div class="a" style="left:104.4px;top:680.2px;width:140.20px;height:22.80px;background:#fdfdfd"></div>
<svg class="a" style="left:7px;top:686.500px" width="7" height="9" viewBox="0 0 7 9" fill="none" stroke="#888" stroke-width=".9"><path d="M.6 1.800c0-1.600 5.800-1.600 5.800 0v5.400c0 1.600-5.800 1.600-5.800 0zM.6 1.800c0 1.500 5.800 1.500 5.800 0"/></svg>
<span class="t" style="left:20.00px;top:687px;font-size:9.4px;color:#7a7a7a;">Data Source</span>
<span class="t" style="left:110.00px;top:687px;font-size:9.9px;color:#2b2b2b;-webkit-text-stroke:.3px #2b2b2b">DUPLICATION: of Checkouts</span>
<div class="a" style="left:270.5px;top:681px;width:1.00px;height:20.00px;background:#d9d9d9"></div>
<div class="a" style="left:297.5px;top:681px;width:1.00px;height:20.00px;background:#d9d9d9"></div>
<div class="a" style="left:322px;top:681px;width:1.00px;height:20.00px;background:#d9d9d9"></div>
<svg class="a" style="left:249.500px;top:682.800px" width="72" height="18" viewBox="250 682 72 18" fill="none" stroke="#888" stroke-width=".9"><path d="M254.500 685.500h8v8h-8z"/><path d="M257 691.500v-2M259.500 691.500v-4"/><path d="M263.5 692.0v5M261.0 694.5h5" stroke="#333" stroke-width="1.300"/><path d="M280 685.500h9v8h-9zM280 689.500h9M284.500 685.500v8"/><path d="M290 692.0v5M287.5 694.5h5" stroke="#333" stroke-width="1.300"/><path d="M304.500 685.500h9v8h-9zM309 685.500v8"/><path d="M314.5 692.0v5M312.0 694.5h5" stroke="#333" stroke-width="1.300"/></svg>
<div class="a" style="left:0px;top:703px;width:1280.00px;height:17.00px;background:#eaeaea;border-top:1px solid #dcdcdc"></div>
<span class="t" style="left:10.00px;top:708px;font-size:8.3px;color:#6a6a6a;">112 marks</span>
<span class="t" style="left:62.30px;top:708px;font-size:8.3px;color:#6a6a6a;">56 rows by 2 columns</span>
<span class="t" style="left:155.00px;top:708px;font-size:8.3px;color:#6a6a6a;">SUM of Measure Values: 14,092</span>
<div class="a" style="left:979.5px;top:704px;width:1.00px;height:16.00px;background:#d9d9d9"></div>
<div class="a" style="left:1080px;top:704px;width:1.00px;height:16.00px;background:#d9d9d9"></div>
<div class="a" style="left:1102.5px;top:704px;width:1.00px;height:16.00px;background:#d9d9d9"></div>
<div class="a" style="left:1123.5px;top:704px;width:1.00px;height:16.00px;background:#d9d9d9"></div>
<div class="a" style="left:1161px;top:704px;width:1.00px;height:16.00px;background:#d9d9d9"></div>
<div class="a" style="left:1220px;top:704px;width:1.00px;height:16.00px;background:#d9d9d9"></div>
<svg class="a" style="left:984px;top:705.500px" width="9" height="11" viewBox="0 0 9 11" fill="none" stroke="#888" stroke-width=".9"><circle cx="4.500" cy="2.700" r="2.100"/><path d="M.6 10.300c0-3 1.500-4.500 3.900-4.500s3.900 1.500 3.900 4.500z"/></svg>
<span class="t" style="left:1001.00px;top:709px;font-size:8.2px;color:#6a6a6a;">Keith Helfrich</span>
<svg class="a" style="left:1069.500px;top:709.500px" width="6" height="4" viewBox="0 0 6 4"><path d="M.3.300h5.400L3 3.600z" fill="#333"/></svg>
<svg class="a" style="left:1165px;top:707px" width="50" height="9" viewBox="1165 707 50 9" fill="#c6c6c6"><path d="M1169 709v5h1v-5zM1174 709v5l-3.500-2.500zM1186 709v5l-3.500-2.500zM1194.500 709v5l3.500-2.500zM1206.500 709v5l3.500-2.500zM1210.500 709v5h1v-5z"/></svg>
<svg class="a" style="left:1225px;top:707px" width="45" height="10" viewBox="1225 707 45 10" fill="none" stroke="#aaa" stroke-width=".9"><path d="M1226 708h8.500v8h-8.500zM1226 710.700h8.500M1226 713.300h8.500M1228.800 708v8M1231.600 708v8"/><path d="M1243 708h8.500v8h-8.500z" fill="#bbb"/><path d="M1243 712.500h8.500M1245.800 712.500v3.500M1248.600 712.500v3.500" stroke="#eee"/><rect x="1259.500" y="707.700" width="9" height="8.600" fill="#444" stroke="none"/></svg>
<div class="a" style="left:0;top:717px;width:3px;height:3px;background:radial-gradient(circle at 100% 0,rgba(0,0,0,0) 2.400px,#2a2a2a 3.200px)"></div>
<div class="a" style="left:1277px;top:717px;width:3px;height:3px;background:radial-gradient(circle at 0 0,rgba(0,0,0,0) 2.400px,#555 3.200px)"></div>
<svg class="a" style="left:348.700px;top:544.300px" width="14.400" height="19.200" viewBox="0 0 12 16"><path d="M1.300 1v10.200l2.400-2.200 1.800 4.200 1.500-.7-1.800-4.100h3.400z" fill="#0a0a0a" stroke="#fafafa" stroke-width=".9"/></svg>
</body></html>
